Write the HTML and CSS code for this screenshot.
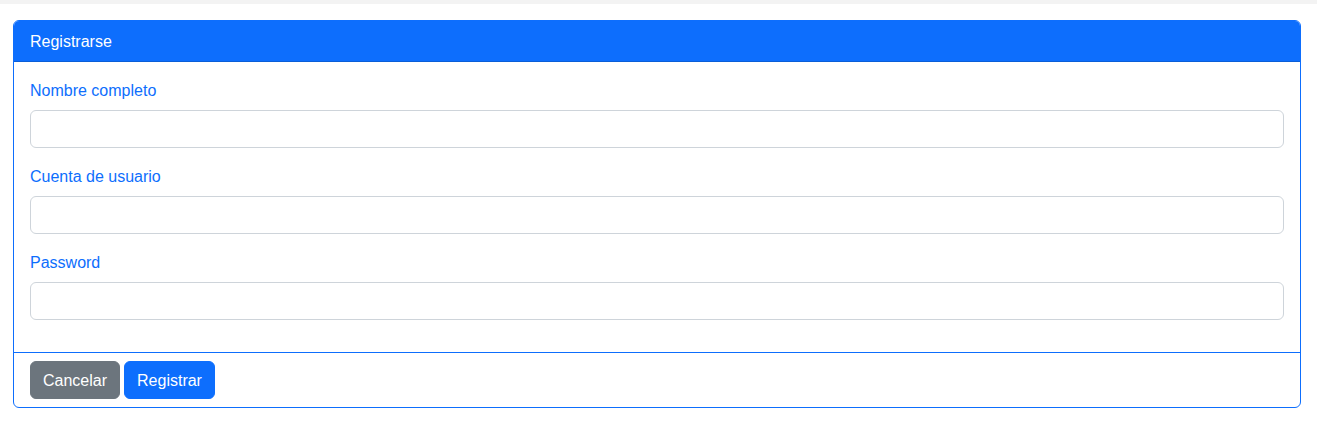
FILE: index.html
```html
<!DOCTYPE html>
<html lang="es">
<head>
<meta charset="utf-8">
<title>Registrarse</title>
<link rel="stylesheet" href="styles.css">
</head>
<body>
<div class="topstrip"></div>
<main class="page">
  <section class="card">
    <div class="card-header">Registrarse</div>
    <div class="card-body">
      <div class="field">
        <label class="label" for="nombre">Nombre completo</label>
        <input class="input" id="nombre" type="text">
      </div>
      <div class="field">
        <label class="label" for="cuenta">Cuenta de usuario</label>
        <input class="input" id="cuenta" type="text">
      </div>
      <div class="field">
        <label class="label" for="pass">Password</label>
        <input class="input" id="pass" type="password">
      </div>
    </div>
    <div class="card-footer">
      <button class="btn btn-secondary" type="button">Cancelar</button>
      <button class="btn btn-primary" type="button">Registrar</button>
    </div>
  </section>
</main>
</body>
</html>
```
FILE: styles.css
```css
* { box-sizing: border-box; }
html, body { margin: 0; padding: 0; background: #fff; }
body {
  font-family: "Liberation Sans", Arial, sans-serif;
  font-size: 16px;
  line-height: 24px;
  color: #212529;
}
.topstrip {
  height: 4px;
  background: #f3f3f3;
}
.page {
  padding: 16px 16px 0 13px;
}
.card {
  border: 1px solid #0d6efd;
  border-radius: 6px;
  background: #fff;
  display: flex;
  flex-direction: column;
}
.card-header {
  background: #0d6efd;
  color: #fff;
  padding: 9px 16px 7px;
  border-bottom: 1px solid #0b5ed7;
  border-radius: 5px 5px 0 0;
  height: 41px;
  line-height: 24px;
}
.card-body {
  padding: 16px 16px 0 16px;
  display: flex;
  flex-direction: column;
}
.field {
  display: flex;
  flex-direction: column;
  margin-bottom: 16px;
}
.field:last-child { margin-bottom: 32px; }
.label {
  color: #0d6efd;
  padding-top: 1px;
  margin-bottom: 7px;
  line-height: 24px;
}
.input {
  height: 38px;
  border: 1px solid #ced4da;
  border-radius: 6px;
  padding: 6px 12px;
  font: inherit;
  background: #fff;
}
.card-footer {
  border-top: 1px solid #0d6efd;
  padding: 8px 16px;
  display: flex;
  gap: 4px;
}
.btn {
  height: 38px;
  padding: 7px 12px 5px;
  border-radius: 6px;
  border: 1px solid transparent;
  font: inherit;
  color: #fff;
  line-height: 24px;
  cursor: pointer;
}
.btn-secondary { background: #6c757d; border-color: #6c757d; }
.btn-primary { background: #0d6efd; border-color: #0d6efd; }
```
